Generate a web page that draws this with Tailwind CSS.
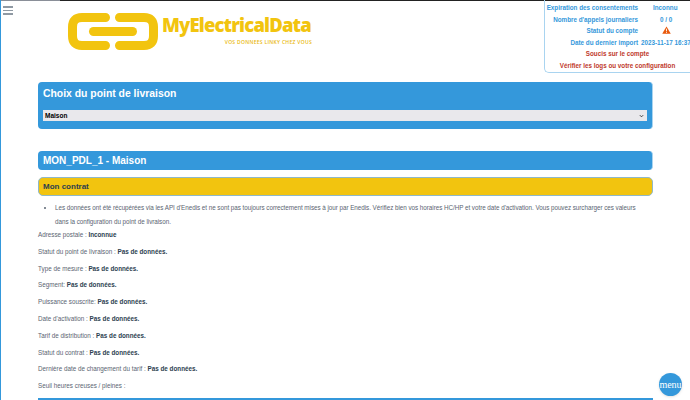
<!DOCTYPE html>
<html lang="fr">

<head>
  <meta charset="UTF-8" />
  <title>MyElectricalData</title>
  <script src="https://cdn.jsdelivr.net/npm/@tailwindcss/browser@4"></script>
</head>

<body class="relative h-[400px] w-[690px] overflow-hidden bg-white font-['Liberation_Sans',sans-serif] text-[6.300px] text-[#5a6472]">

  <!-- top line + left edge -->
  <div class="flex h-px">
    <div class="w-[60px] bg-[#8a8f98]"></div>
    <div class="flex-1 bg-[#222]"></div>
  </div>
  <div class="absolute left-0 top-0 h-[400px] w-px bg-[#3498db]"></div>

  <!-- hamburger -->
  <div class="absolute left-[3px] top-[6px] flex w-[10px] flex-col gap-[2px]">
    <div class="h-[1.500px] bg-[#8f99a3]"></div>
    <div class="h-[1.500px] bg-[#8f99a3]"></div>
    <div class="h-[1.500px] bg-[#8f99a3]"></div>
  </div>

  <!-- logo -->
  <header class="flex h-[80px] items-start pl-[68px] pt-[11px]">
    <svg class="mt-px h-[37px] w-[90px] shrink-0" viewBox="0 0 90 37">
      <path d="M37.500 4.500H14Q4.500 4.500 4.500 14V23Q4.500 32.500 14 32.500H37.500" fill="none" stroke="#f2c40f" stroke-width="9" stroke-linecap="round"/>
      <path d="M51.500 4.500H76Q85.500 4.500 85.500 14V23Q85.500 32.500 76 32.500H51.500" fill="none" stroke="#f2c40f" stroke-width="9" stroke-linecap="round"/>
      <rect x="21" y="14" width="48" height="9" rx="4.500" fill="#f2c40f"/>
    </svg>
    <div class="ml-[4px] w-[150px]">
      <div class="mt-[1px] text-[18.500px] leading-[24px] font-extrabold whitespace-nowrap text-[#f2c40f] font-['Open_Sans',sans-serif] tracking-[-0.85px]">MyElectricalData</div>
      <div class="mt-[2px] text-right text-[5px] leading-[6px] font-semibold tracking-[0.3px] whitespace-nowrap text-[#eab90f] font-['Open_Sans',sans-serif]">VOS DONNEES LINKY CHEZ VOUS</div>
    </div>
  </header>

  <!-- account status -->
  <aside class="absolute right-0 top-0 h-[73px] w-[146px] rounded-bl-[5px] border-b border-l border-[#a9d4f0] pt-[2px] text-[6.300px] leading-[11.500px] font-bold text-[#3498db]">
    <div class="grid grid-cols-[93px_1fr] gap-x-[3px]">
      <div class="text-right whitespace-nowrap">Expiration des consentements</div>
      <div class="pl-[12px] whitespace-nowrap">Inconnu</div>
      <div class="text-right whitespace-nowrap">Nombre d'appels journaliers</div>
      <div class="pl-[19px] whitespace-nowrap">0 / 0</div>
      <div class="text-right whitespace-nowrap">Statut du compte</div>
      <div class="pl-[21px]">
        <svg class="mt-[1px] h-[8px] w-[9px]" viewBox="0 0 10 9">
          <path d="M5 0.500 9.800 8.800H0.200Z" fill="#e8590c"/>
          <rect x="4.500" y="3" width="1" height="3" fill="#fff"/>
          <rect x="4.500" y="6.700" width="1" height="1" fill="#fff"/>
        </svg>
      </div>
      <div class="text-right whitespace-nowrap">Date du dernier import</div>
      <div class="whitespace-nowrap">2023-11-17 16:37</div>
    </div>
    <div class="text-center text-[#c0392b]">Soucis sur le compte</div>
    <div class="text-center whitespace-nowrap text-[#c0392b]">Vérifier les logs ou votre configuration</div>
  </aside>

  <main class="ml-[38px] w-[615px]">
    <section class="mt-[1px] h-[47px] rounded-[4px] border-r border-[#a9d4f0] bg-[#3498db] px-[5px] pt-[5px]">
      <h2 class="text-[10.400px] leading-[14px] font-bold text-white">Choix du point de livraison</h2>
      <div class="mt-[9px] flex h-[11px] w-[604px] items-center justify-between bg-[#e9e8ec] pl-[2px] pr-[3px] text-[6.500px] font-bold text-black">
        <span>Maison</span>
        <svg class="h-[4px] w-[5px]" viewBox="0 0 6 4"><path d="M1 1 3 3 5 1" fill="none" stroke="#222" stroke-width="1"/></svg>
      </div>
    </section>

    <h1 class="mt-[22px] flex h-[19px] items-center rounded-[4px] border-r border-[#a9d4f0] bg-[#3498db] px-[5px] text-[10px] font-bold text-white">MON_PDL_1 - Maison</h1>

    <h3 class="mt-[7px] flex h-[19px] items-center rounded-[5px] border border-[#8fb8c8] bg-[#f2c40f] px-[4px] text-[8px] font-bold text-[#2c3e50]">Mon contrat</h3>

    <ul class="mt-[5px] list-disc pl-[17px] leading-[14px]">
      <li class="w-[590px] text-[6.300px] tracking-[-0.04px]">Les données ont été récupérées via les API d'Enedis et ne sont pas toujours correctement mises à jour par Enedis. Vérifiez bien vos horaires HC/HP et votre date d'activation. Vous pouvez surcharger ces valeurs dans la configuration du point de livraison.</li>
    </ul>

    <div class="mt-[2px] flex flex-col gap-[8.800px] leading-[8px]">
      <p>Adresse postale : <b class="text-[#2c3e50]">Inconnue</b></p>
      <p>Statut du point de livraison : <b class="text-[#2c3e50]">Pas de données.</b></p>
      <p>Type de mesure : <b class="text-[#2c3e50]">Pas de données.</b></p>
      <p>Segment: <b class="text-[#2c3e50]">Pas de données.</b></p>
      <p>Puissance souscrite: <b class="text-[#2c3e50]">Pas de données.</b></p>
      <p>Date d'activation : <b class="text-[#2c3e50]">Pas de données.</b></p>
      <p>Tarif de distribution : <b class="text-[#2c3e50]">Pas de données.</b></p>
      <p>Statut du contrat : <b class="text-[#2c3e50]">Pas de données.</b></p>
      <p>Dernière date de changement du tarif : <b class="text-[#2c3e50]">Pas de données.</b></p>
      <p>Seuil heures creuses / pleines :</p>
    </div>

    <div class="mt-[8px] h-[4px] bg-[#3498db]"></div>
  </main>

  <!-- floating menu -->
  <div class="absolute left-[659px] top-[373px] flex h-[23px] w-[23px] items-center justify-center rounded-full bg-[#3498db] font-['Liberation_Serif',serif] text-[10px] text-white shadow-sm">menu</div>
</body>

</html>
